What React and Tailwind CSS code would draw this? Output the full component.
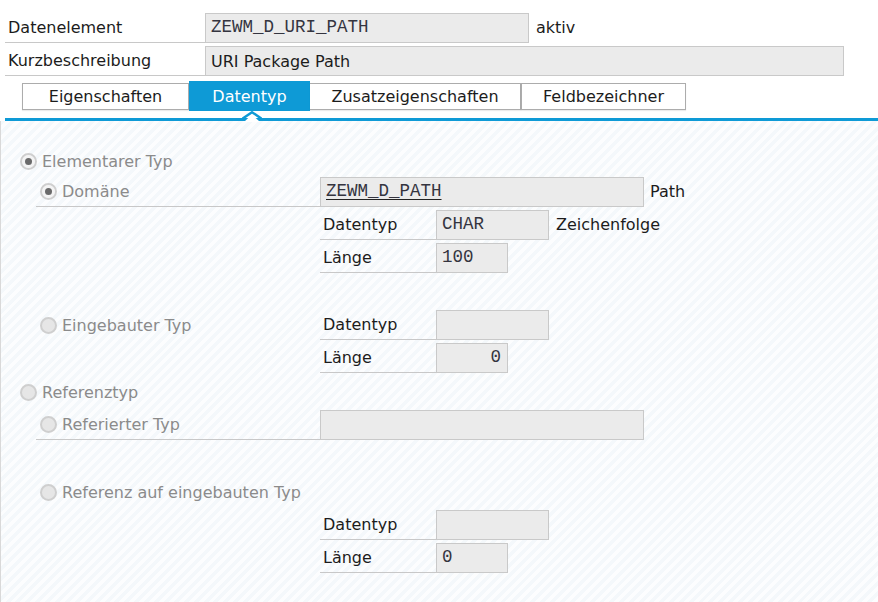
import React from "react";

const mono = "[font-family:'Liberation_Mono','Courier_New',monospace] text-[17.5px] text-[#34343f]";

function Radio({ checked }) {
  return (
    <span className="relative inline-flex w-[17px] h-[17px] shrink-0 rounded-full border-2 border-[#cfcfcf] bg-[#e6e6e6] items-center justify-center">
      {checked && <span className="w-[13px] h-[13px] rounded-full bg-[#f4f4f4] flex items-center justify-center"><span className="w-[7px] h-[7px] rounded-full bg-[#6a6a6a]" /></span>}
    </span>
  );
}

function Input({ w, children, align = "left", underline = false }) {
  return (
    <div
      className={`h-[30px] ${w} shrink-0 bg-[#ebebeb] border border-[#c9c9c9] flex items-center ${
        align === "right" ? "justify-end pr-[6px]" : "pl-[5px]"
      } ${mono}`}
    >
      {underline ? <span className="underline decoration-[#222] underline-offset-[3px]">{children}</span> : children}
    </div>
  );
}

function FieldLabel({ children }) {
  return (
    <div className="ml-[320px] w-[116px] h-[30px] shrink-0 border-b border-[#c8c8c8] flex items-center pl-[3px] text-[#1c1c1c]">
      {children}
    </div>
  );
}

export default function App() {
  return (
    <div className="w-[878px] h-[602px] bg-white overflow-hidden relative flex flex-col font-['DejaVu_Sans',sans-serif] text-[16px] leading-none text-[#1c1c1c]">
      <div className="pt-[13px] pl-[5px] flex flex-col gap-[3px]">
        <div className="flex items-center h-[30px]">
          <div className="w-[200px] h-[30px] border-b border-[#c8c8c8] flex items-center pl-[3px] pt-[1px]">Datenelement</div>
          <Input w="w-[324px]">ZEWM_D_URI_PATH</Input>
          <span className="ml-[7px]">aktiv</span>
        </div>
        <div className="flex items-center h-[30px]">
          <div className="w-[200px] h-[30px] border-b border-[#c8c8c8] flex items-center pl-[3px] pt-[1px]">Kurzbeschreibung</div>
          <div className="h-[30px] w-[639px] bg-[#ebebeb] border border-[#c9c9c9] flex items-center pl-[5px] pt-[1px] text-[#1c1c1c]">URI Package Path</div>
        </div>
      </div>

      <div className="mt-[5px] pl-[22px] flex items-center h-[30px]">
        <div className="w-[167px] h-[27px] border border-[#acacac] bg-white flex items-center justify-center pt-[1px] shadow-[0_1px_1px_rgba(0,0,0,0.08)]">Eigenschaften</div>
        <div className="w-[121px] h-[30px] bg-[#0e9ad6] text-white flex items-center justify-center pt-[1px]">Datentyp</div>
        <div className="w-[211px] h-[27px] border border-[#acacac] border-l-0 bg-white flex items-center justify-center pt-[1px] shadow-[0_1px_1px_rgba(0,0,0,0.08)]">Zusatzeigenschaften</div>
        <div className="w-[165px] h-[27px] border border-[#acacac] bg-white flex items-center justify-center pt-[1px] shadow-[0_1px_1px_rgba(0,0,0,0.08)]">Feldbezeichner</div>
      </div>

      <div className="relative mt-[7px] ml-[5px] h-[3px] bg-[#0e9ad6]">
        <svg className="absolute left-[237px] top-[-7px]" width="20" height="11" viewBox="0 0 20 11">
          <polygon points="2,11 10,3.5 18,11" fill="#ffffff" />
          <polyline points="0,8 10,1.2 20,8" fill="none" stroke="#0e9ad6" strokeWidth="2.4" />
        </svg>
      </div>

      <div className="flex-1 border-l border-[#d9d9d9] bg-[repeating-linear-gradient(135deg,#f4f8fb_0px,#f4f8fb_3.5px,#fcfdfe_3.5px,#fcfdfe_7px)] flex flex-col">
        {/* Elementarer Typ */}
        <div className="mt-[25px] h-[30px] flex items-center pl-[19px] text-[#8b8b8b]">
          <Radio checked />
          <span className="ml-[5px] pt-[1px]">Elementarer Typ</span>
        </div>
        {/* Domäne */}
        <div className="mt-[1px] h-[30px] flex items-center">
          <div className="ml-[35px] w-[284px] h-[30px] border-b border-[#c8c8c8] flex items-center pl-[4px] text-[#8b8b8b]">
            <Radio checked />
            <span className="ml-[5px] pt-[1px]">Domäne</span>
          </div>
          <Input w="w-[324px]" underline>ZEWM_D_PATH</Input>
          <span className="ml-[6px]">Path</span>
        </div>
        <div className="mt-[3px] h-[30px] flex items-center">
          <div className="ml-[-1px]" />
          <FieldLabel>Datentyp</FieldLabel>
          <Input w="w-[113px]">CHAR</Input>
          <span className="ml-[7px]">Zeichenfolge</span>
        </div>
        <div className="mt-[3px] h-[30px] flex items-center">
          <div className="ml-[-1px]" />
          <FieldLabel>Länge</FieldLabel>
          <Input w="w-[72px]">100</Input>
        </div>

        {/* Eingebauter Typ */}
        <div className="mt-[37px] h-[30px] flex items-center">
          <div className="ml-[35px] w-[284px] h-[30px] flex items-center pl-[4px] text-[#8b8b8b]">
            <Radio />
            <span className="ml-[5px] pt-[1px]">Eingebauter Typ</span>
          </div>
          <div className="w-[116px] h-[30px] shrink-0 border-b border-[#c8c8c8] flex items-center pl-[3px]">Datentyp</div>
          <Input w="w-[113px]" />
        </div>
        <div className="mt-[3px] h-[30px] flex items-center">
          <div className="ml-[-1px]" />
          <FieldLabel>Länge</FieldLabel>
          <Input w="w-[72px]" align="right">0</Input>
        </div>

        {/* Referenztyp */}
        <div className="mt-[4px] h-[30px] flex items-center pl-[19px] text-[#8b8b8b]">
          <Radio />
          <span className="ml-[5px] pt-[1px]">Referenztyp</span>
        </div>
        <div className="mt-[3px] h-[30px] flex items-center">
          <div className="ml-[35px] w-[284px] h-[30px] border-b border-[#c8c8c8] flex items-center pl-[4px] text-[#8b8b8b]">
            <Radio />
            <span className="ml-[5px] pt-[1px]">Referierter Typ</span>
          </div>
          <Input w="w-[324px]" />
        </div>

        {/* Referenz auf eingebauten Typ */}
        <div className="mt-[37px] h-[30px] flex items-center">
          <div className="ml-[35px] flex items-center pl-[4px] text-[#8b8b8b]">
            <Radio />
            <span className="ml-[5px] pt-[1px]">Referenz auf eingebauten Typ</span>
          </div>
        </div>
        <div className="mt-[3px] h-[30px] flex items-center">
          <div className="ml-[-1px]" />
          <FieldLabel>Datentyp</FieldLabel>
          <Input w="w-[113px]" />
        </div>
        <div className="mt-[3px] h-[30px] flex items-center">
          <div className="ml-[-1px]" />
          <FieldLabel>Länge</FieldLabel>
          <Input w="w-[72px]">0</Input>
        </div>
      </div>
    </div>
  );
}
